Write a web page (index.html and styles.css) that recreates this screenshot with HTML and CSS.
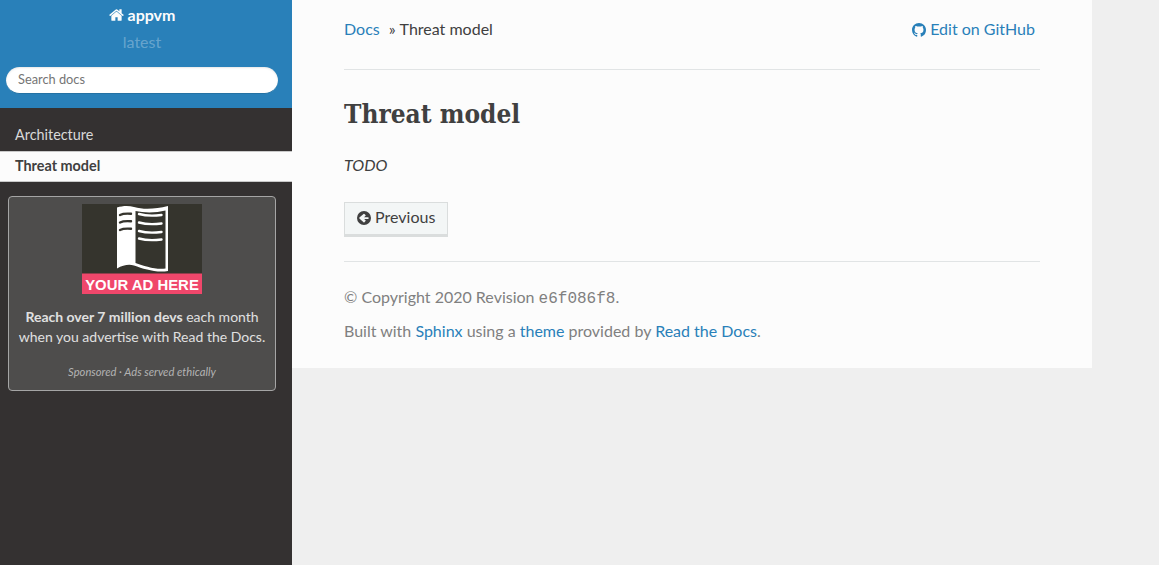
FILE: index.html
```html
<!DOCTYPE html>
<html lang="en">
<head>
<meta charset="utf-8">
<title>Threat model</title>
<link rel="stylesheet" href="styles.css">
</head>
<body>
<nav class="side">
  <div class="side-head">
    <a class="brand" href="#"><svg class="ico-home" viewBox="0 0 1664 1792" aria-hidden="true"><path fill="currentColor" d="M1408 992v480q0 26-19 45t-45 19h-384v-384h-256v384h-384q-26 0-45-19t-19-45v-480q0-1 .5-3t.5-3l575-474 575 474q1 2 1 6zm223-69l-62 74q-8 9-21 11h-3q-13 0-21-7l-692-577-692 577q-12 8-24 7-13-2-21-11l-62-74q-8-10-7-23.500t11-21.500l719-599q32-26 76-26t76 26l244 204v-195q0-14 9-23t23-9h192q14 0 23 9t9 23v408l219 182q10 8 11 21.500t-7 23.500z"/></svg> appvm</a>
    <div class="version">latest</div>
    <input class="search" type="text" placeholder="Search docs">
  </div>
  <ul class="menu">
    <li><a class="menu-link" href="#">Architecture</a></li>
    <li><a class="menu-link current" href="#">Threat model</a></li>
  </ul>
  <div class="ad">
    <svg class="ad-img" viewBox="0 0 120 90" role="img" aria-label="Your ad here">
      <rect width="120" height="90" fill="#35342d"/>
      <path fill="#fff" d="M35 3.500C41 1.500 47 1.500 52 3C62 6 74 5 86 2V67C74 69 62 65 52 61.500C47 60 41 61 35 64.500Z"/>
      <path fill="#35342d" d="M53.500 7C62 9 74 9 83.500 6.500V64.500C74 66 62 62 53.500 59Z"/>
      <g fill="none" stroke="#35342d" stroke-width="2.400" stroke-linecap="round">
        <path d="M38 11C41 9.500 45 9.500 49 9.800M38 18.500C41 17 45 17 49 17.300M38 26C41 24.500 45 24.500 49 24.800"/>
      </g>
      <g fill="none" stroke="#fff" stroke-width="2.400" stroke-linecap="round">
        <path d="M57 10C64 12 72 12 79.500 11M57 18.500C64 20.500 72 20.500 79.500 19.500M57 27C64 29 72 29 79.500 28M57 34.500C64 36.500 72 36.500 79.500 35.500"/>
      </g>
      <rect y="69.500" width="120" height="20.500" fill="#f0476b"/>
      <text x="60" y="86" text-anchor="middle" class="ad-label">YOUR AD HERE</text>
    </svg>
    <p class="ad-text"><strong>Reach over 7 million devs</strong> each month when you advertise with Read the Docs.</p>
    <p class="ad-note">Sponsored · Ads served ethically</p>
  </div>
</nav>
<main class="wrap">
  <div class="crumbs">
    <div class="crumb-list"><a href="#">Docs</a><span class="sep">»</span><span>Threat model</span></div>
    <a class="edit" href="#"><svg class="ico-gh" viewBox="0 0 16 16" aria-hidden="true"><path fill="currentColor" d="M8 0C3.580 0 0 3.580 0 8c0 3.540 2.290 6.530 5.470 7.590.4.070.55-.17.55-.38 0-.19-.01-.82-.01-1.490-2.010.37-2.530-.49-2.690-.94-.09-.23-.48-.94-.82-1.130-.28-.15-.68-.52-.01-.53.63-.01 1.080.58 1.230.82.72 1.210 1.870.87 2.330.66.070-.52.28-.87.51-1.070-1.780-.2-3.640-.89-3.640-3.950 0-.87.31-1.590.82-2.150-.08-.2-.36-1.020.08-2.120 0 0 .67-.21 2.200.82.64-.18 1.320-.27 2-.27s1.360.09 2 .27c1.530-1.040 2.200-.82 2.200-.82.44 1.100.16 1.920.08 2.120.51.56.82 1.270.82 2.150 0 3.070-1.870 3.750-3.650 3.950.29.25.54.73.54 1.480 0 1.070-.01 1.930-.01 2.200 0 .21.15.46.55.38A8.010 8.010 0 0 0 16 8c0-4.420-3.580-8-8-8z"/></svg> Edit on GitHub</a>
  </div>
  <hr class="rule rule-top">
  <h1 class="title">Threat model</h1>
  <p class="todo">TODO</p>
  <a class="btn" href="#"><svg class="ico-prev" viewBox="0 0 16 16" aria-hidden="true"><path fill="currentColor" d="M8 1a7 7 0 1 0 0 14A7 7 0 0 0 8 1zm.4 2.900 1.100 1.100a.6.6 0 0 1 0 .85L8.100 7.200H12a.7.7 0 0 1 .7.7v.3a.7.7 0 0 1-.7.7H8.100l1.400 1.350a.6.6 0 0 1 0 .85l-1.100 1.100a.6.6 0 0 1-.85 0L3.400 8.400a.6.6 0 0 1 0-.85L7.550 3.900a.6.6 0 0 1 .85 0z"/></svg> Previous</a>
  <hr class="rule rule-bottom">
  <p class="foot">© Copyright 2020 Revision <code class="rev">e6f086f8</code>.</p>
  <p class="foot foot-last">Built with <a href="#">Sphinx</a> using a <a href="#">theme</a> provided by <a href="#">Read the Docs</a>.</p>
</main>
</body>
</html>
```

FILE: styles.css
```css
html, body {
  margin: 0;
  padding: 0;
  height: 100%;
}
body {
  display: flex;
  align-items: flex-start;
  height: 565px;
  overflow: hidden;
  background: #efefef;
  font-family: Lato, "Liberation Sans", sans-serif;
  font-size: 16px;
  color: #404040;
  text-rendering: optimizeLegibility;
}
a {
  color: #2980b9;
  text-decoration: none;
}
.side {
  flex: 0 0 292px;
  height: 565px;
  background: #343131;
  display: flex;
  flex-direction: column;
}
.side-head {
  height: 108px;
  box-sizing: border-box;
  background: #2980b9;
  color: #fcfcfc;
  display: flex;
  flex-direction: column;
  align-items: center;
  padding: 5px 14px 0 6px;
}
.brand {
  color: #fcfcfc;
  font-weight: 700;
  font-size: 16px;
  line-height: 19px;
  display: flex;
  align-items: center;
  gap: 4px;
  white-space: nowrap;
}
.ico-home {
  width: 15px;
  height: 16px;
}
.version {
  color: rgba(255, 255, 255, 0.3);
  font-size: 16px;
  line-height: 20px;
  margin-top: 8px;
}
.search {
  margin-top: 15px;
  width: 272px;
  height: 27px;
  box-sizing: border-box;
  border: 0;
  border-bottom: 1px solid #2472a4;
  border-radius: 50px;
  padding: 0 12px 2px;
  font-family: Lato, "Liberation Sans", sans-serif;
  font-size: 12.800px;
  background: #fff;
  box-shadow: inset 0 1px 2px rgba(0, 0, 0, 0.1);
  outline: none;
}
.search::placeholder {
  color: #757575;
  opacity: 1;
}
.menu {
  list-style: none;
  margin: 0;
  padding: 14px 0 0;
}
.menu-link {
  display: block;
  height: 29px;
  box-sizing: border-box;
  padding: 0 15px;
  line-height: 26px;
  font-size: 14.400px;
  color: #d9d9d9;
}
.menu-link.current {
  height: 31px;
  line-height: 28px;
  background: #fcfcfc;
  color: #404040;
  font-weight: 700;
  border-top: 1px solid #c9c9c9;
  border-bottom: 1px solid #c9c9c9;
}
.ad {
  margin: 14px 16px 0 8px;
  height: 195px;
  box-sizing: border-box;
  background: #4e4d4c;
  border: 1px solid #a5a5a5;
  border-radius: 4px;
  padding: 7px 6px 0;
  color: #e0e0e0;
  display: flex;
  flex-direction: column;
  align-items: center;
  text-align: center;
}
.ad-img {
  width: 120px;
  height: 90px;
  flex: none;
}
.ad-label {
  font-family: "Liberation Sans", sans-serif;
  font-weight: 700;
  font-size: 14.900px;
  fill: #fff;
}
.ad-text {
  margin: 13px 0 0;
  font-size: 14px;
  line-height: 20px;
}
.ad-note {
  margin: 17px 0 0;
  font-size: 11.200px;
  line-height: 16px;
  font-style: italic;
  color: #b3b3b3;
}
.wrap {
  flex: 0 0 800px;
  height: 368px;
  box-sizing: border-box;
  background: #fcfcfc;
  padding: 19px 52px 0;
}
.crumbs {
  display: flex;
  justify-content: space-between;
  height: 20px;
  line-height: 20px;
  font-size: 16px;
  padding-right: 5px;
}
.crumb-list {
  white-space: nowrap;
}
.sep {
  margin: 0 4px 0 9px;
}
.edit {
  white-space: nowrap;
}
.ico-gh {
  width: 14px;
  height: 14px;
  vertical-align: -2px;
}
.rule {
  margin: 0;
  border: 0;
  border-top: 1px solid #e1e4e5;
}
.rule-top {
  margin-top: 30px;
}
.title {
  margin: 27px 0 0;
  font-family: "DejaVu Serif Condensed", "DejaVu Serif", serif;
  font-weight: 700;
  font-size: 26px;
  line-height: 34px;
  color: #404040;
}
.todo {
  margin: 22px 0 0;
  font-style: italic;
  line-height: 24px;
  color: #404040;
}
.btn {
  display: block;
  width: fit-content;
  margin-top: 25px;
  box-sizing: border-box;
  height: 35px;
  padding: 0 12px 0 11px;
  line-height: 28px;
  background: #f3f6f6;
  color: #404040;
  border: 1px solid rgba(0, 0, 0, 0.1);
  box-shadow: inset 0 -2px 0 rgba(0, 0, 0, 0.1);
}
.ico-prev {
  width: 16px;
  height: 16px;
  margin-right: -1px;
  vertical-align: -3px;
}
.rule-bottom {
  margin-top: 24px;
}
.foot {
  margin: 23px 0 0;
  line-height: 24px;
  color: #808080;
}
.foot-last {
  margin-top: 8px;
}
.rev {
  font-family: "Liberation Mono", monospace;
  font-size: 16px;
}
```
